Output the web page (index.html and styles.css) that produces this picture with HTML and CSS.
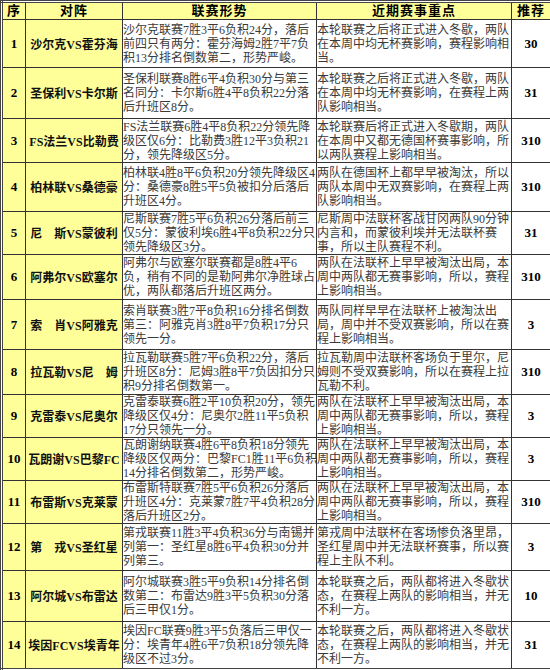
FILE: index.html
```html
<!DOCTYPE html>
<html lang="zh">
<head>
<meta charset="utf-8">
<title>推荐</title>
<link rel="stylesheet" href="styles.css">
</head>
<body>
<table class="grid">
  <colgroup>
    <col class="c-no"><col class="c-team"><col class="c-info"><col class="c-focus"><col class="c-pick">
  </colgroup>
  <thead>
    <tr class="head">
      <th>序</th><th>对阵</th><th>联赛形势</th><th>近期赛事重点</th><th>推荐</th>
    </tr>
  </thead>
  <tbody>
    <tr class="r48">
      <td class="no">1</td><td class="team">沙尔克VS霍芬海</td>
      <td class="txt">沙尔克联赛7胜3平6负积24分，落后<br>前四只有两分：霍芬海姆2胜7平7负<br>积13分排名倒数第二，形势严峻。</td>
      <td class="txt">本轮联赛之后将正式进入冬歇，两队<br>在本周中均无杯赛影响，赛程影响相<br>当。</td>
      <td class="pick">30</td>
    </tr>
    <tr class="r51">
      <td class="no">2</td><td class="team">圣保利VS卡尔斯</td>
      <td class="txt">圣保利联赛8胜6平4负积30分与第三<br>名同分：卡尔斯6胜4平8负积22分落<br>后升班区8分。</td>
      <td class="txt">本轮联赛之后将正式进入冬歇，两队<br>在本周中均无杯赛影响，在赛程上两<br>队影响相当。</td>
      <td class="pick">31</td>
    </tr>
    <tr class="r44">
      <td class="no">3</td><td class="team">FS法兰VS比勒费</td>
      <td class="txt">FS法兰联赛6胜4平8负积22分领先降<br>级区仅6分：比勒费3胜12平3负积21<br>分，领先降级区5分。</td>
      <td class="txt">本轮联赛后将正式进入冬歇期，两队<br>在本周中又都无德国杯赛事影响，所<br>以两队赛程上影响相当。</td>
      <td class="pick">310</td>
    </tr>
    <tr class="r49">
      <td class="no">4</td><td class="team">柏林联VS桑德豪</td>
      <td class="txt">柏林联4胜8平6负积20分领先降级区4<br>分：桑德豪8胜5平5负被扣分后落后<br>升班区4分。</td>
      <td class="txt">两队在德国杯上都早早被淘汰，所以<br>两队本周中无双赛影响，在赛程上两<br>队影响相当。</td>
      <td class="pick">310</td>
    </tr>
    <tr class="r42">
      <td class="no">5</td><td class="team">尼　斯VS蒙彼利</td>
      <td class="txt">尼斯联赛7胜5平6负积26分落后前三<br>仅5分：蒙彼利埃6胜4平8负积22分只<br>领先降级区3分。</td>
      <td class="txt">尼斯周中法联杯客战甘冈两队90分钟<br>内言和，而蒙彼利埃并无法联杯赛<br>事，所以主队赛程不利。</td>
      <td class="pick">31</td>
    </tr>
    <tr class="r45">
      <td class="no">6</td><td class="team">阿弗尔VS欧塞尔</td>
      <td class="txt">阿弗尔与欧塞尔联赛都是8胜4平6<br>负，稍有不同的是勒阿弗尔净胜球占<br>优，两队都落后升班区两分。</td>
      <td class="txt">两队在法联杯上早早被淘汰出局，本<br>周中两队都无赛事影响，所以，赛程<br>上影响相当。</td>
      <td class="pick">310</td>
    </tr>
    <tr class="r50">
      <td class="no">7</td><td class="team">索　肖VS阿雅克</td>
      <td class="txt">索肖联赛3胜7平8负积16分排名倒数<br>第三：阿雅克肖3胜8平7负积17分只<br>领先一分。</td>
      <td class="txt">两队同样早早在法联杯上被淘汰出<br>局，周中并不受双赛影响，所以在赛<br>程上影响相当。</td>
      <td class="pick">3</td>
    </tr>
    <tr class="r45">
      <td class="no">8</td><td class="team">拉瓦勒VS尼　姆</td>
      <td class="txt">拉瓦勒联赛5胜7平6负积22分，落后<br>升班区8分：尼姆3胜8平7负因扣分只<br>积9分排名倒数第一。</td>
      <td class="txt">拉瓦勒周中法联杯客场负于里尔，尼<br>姆则不受双赛影响，所以在赛程上拉<br>瓦勒不利。</td>
      <td class="pick">310</td>
    </tr>
    <tr class="r42">
      <td class="no">9</td><td class="team">克雷泰VS尼奥尔</td>
      <td class="txt">克雷泰联赛6胜2平10负积20分，领先<br>降级区仅4分：尼奥尔2胜11平5负积<br>17分只领先一分。</td>
      <td class="txt">两队在法联杯上早早被淘汰出局，本<br>周中两队都无赛事影响，所以，赛程<br>上影响相当。</td>
      <td class="pick">3</td>
    </tr>
    <tr class="r43">
      <td class="no">10</td><td class="team">瓦朗谢VS巴黎FC</td>
      <td class="txt">瓦朗谢纳联赛4胜6平8负积18分领先<br>降级区仅两分：巴黎FC1胜11平6负积<br>14分排名倒数第二，形势严峻。</td>
      <td class="txt">两队在法联杯上早早被淘汰出局，本<br>周中两队都无赛事影响，所以，赛程<br>上影响相当。</td>
      <td class="pick">3</td>
    </tr>
    <tr class="r43">
      <td class="no">11</td><td class="team">布雷斯VS克莱蒙</td>
      <td class="txt">布雷斯特联赛7胜5平6负积26分落后<br>升班区4分：克莱蒙7胜7平4负积28分<br>落后升班区2分。</td>
      <td class="txt">两队在法联杯上早早被淘汰出局，本<br>周中两队都无赛事影响，所以，赛程<br>上影响相当。</td>
      <td class="pick">310</td>
    </tr>
    <tr class="r47">
      <td class="no">12</td><td class="team">第　戎VS圣红星</td>
      <td class="txt">第戎联赛11胜3平4负积36分与南锡并<br>列第一：圣红星8胜6平4负积30分并<br>列第三。</td>
      <td class="txt">第戎周中法联杯在客场惨负洛里昂，<br>圣红星周中并无法联杯赛事，所以赛<br>程上主队不利。</td>
      <td class="pick">3</td>
    </tr>
    <tr class="r51">
      <td class="no">13</td><td class="team">阿尔城VS布雷达</td>
      <td class="txt">阿尔城联赛3胜5平9负积14分排名倒<br>数第二：布雷达9胜3平5负积30分落<br>后三甲仅1分。</td>
      <td class="txt">本轮联赛之后，两队都将进入冬歇状<br>态，在赛程上两队的影响相当，并无<br>不利一方。</td>
      <td class="pick">10</td>
    </tr>
    <tr class="r48">
      <td class="no">14</td><td class="team">埃因FCVS埃青年</td>
      <td class="txt">埃因FC联赛9胜3平5负落后三甲仅一<br>分：埃青年4胜6平7负积18分领先降<br>级区不过3分。</td>
      <td class="txt">本轮联赛之后，两队都将进入冬歇状<br>态，在赛程上两队的影响相当，并无<br>不利一方。</td>
      <td class="pick">31</td>
    </tr>
  </tbody>
</table>
</body>
</html>
```

FILE: styles.css
```css
html, body {
  margin: 0;
  padding: 0;
  background: #ffffff;
}

body {
  font-family: "Liberation Serif", "Noto Sans CJK SC", serif;
  color: #222;
}

.grid {
  width: 550px;
  table-layout: fixed;
  border-collapse: collapse;
  border: 3px double #444;
}

.c-no { width: 24px; }
.c-team { width: 97px; }
.c-info { width: 194px; }
.c-focus { width: 195px; }
.c-pick { width: 40px; }

.grid th,
.grid td {
  border: 1px solid #333;
  padding: 0;
  vertical-align: middle;
  overflow: hidden;
}

.head th {
  height: 16px;
  background: #ffff99;
  color: #000;
  font-size: 13px;
  font-weight: bold;
  line-height: 16px;
  text-align: center;
  letter-spacing: 1px;
}

.no {
  background: #ffff99;
  text-align: center;
  font-size: 13px;
  font-weight: bold;
  color: #000;
}

.team {
  background: #ffff99;
  text-align: center;
  font-size: 12px;
  font-weight: bold;
  color: #111;
  white-space: nowrap;
}

.txt {
  font-size: 12px;
  line-height: 14px;
  padding: 0 2px 0 3px;
  white-space: nowrap;
  color: #3a3a3a;
}

.pick {
  text-align: center;
  font-size: 13px;
  font-weight: bold;
  color: #000;
}

.r42 { height: 42px; }
.r43 { height: 43px; }
.r44 { height: 44px; }
.r45 { height: 45px; }
.r47 { height: 47px; }
.r48 { height: 48px; }
.r49 { height: 49px; }
.r50 { height: 50px; }
.r51 { height: 51px; }
```
